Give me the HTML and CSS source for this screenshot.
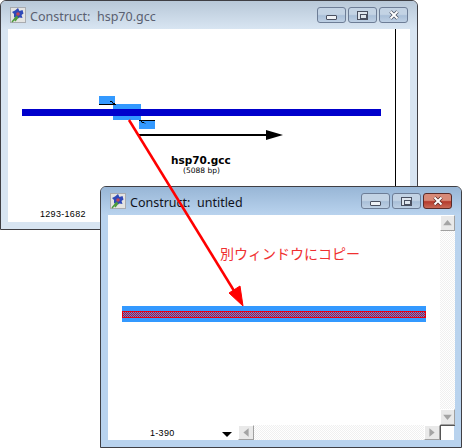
FILE: index.html
```html
<!DOCTYPE html>
<html lang="en">
<head>
    <meta charset="UTF-8">
    <title>Construct</title>
    <link rel="stylesheet" href="styles.css">
</head>
<body>
    <div class="window window-back">
        <div class="titlebar">
            <svg class="app-icon" viewBox="0 0 16 16"><rect x="0.5" y="0.5" width="15" height="15" fill="#e4e4e2" stroke="#a8abb0"/><path d="M8 1l1.500 3 3-1 1 3.500-2 1.500 1 3-3-.5-1.500 1-2-1.500-2 .5 0-3.500-2-2 3-1.500z" fill="#2f49b8"/><circle cx="8" cy="7" r="1.800" fill="#c04858"/><path d="M2 15l5-6M5 14l3-4" stroke="#4c9a3c" stroke-width="1.500"/></svg>
            <span class="title">Construct:  hsp70.gcc</span>
            <div class="controls">
                <div class="ctl"><span class="glyph-min"></span></div>
                <div class="ctl"><span class="glyph-max"></span></div>
                <div class="ctl"><svg class="glyph-x" viewBox="0 0 12 10"><path d="M2.500 1.500l7 7M9.500 1.500l-7 7" fill="none" stroke="#4a5060" stroke-width="3.400"/><path d="M2.500 1.500l7 7M9.500 1.500l-7 7" fill="none" stroke="#fff" stroke-width="2"/></svg></div>
            </div>
        </div>
        <div class="canvas">
            <svg class="drawing" viewBox="8 29 402 193">
                <rect x="99" y="96" width="16" height="8" fill="#3399ff"/>
                <rect x="113" y="104" width="28" height="16" fill="#3399ff"/>
                <rect x="139" y="121" width="16" height="8" fill="#3399ff"/>
                <rect x="22" y="109" width="359" height="7" fill="#0000cc"/>
                <path d="M99 104.500h17M110 101.500h2l1 2h2" fill="none" stroke="#000"/>
                <path d="M139 120.500h16M139 120.500h2l1 2h2l1 1" fill="none" stroke="#000"/>
                <rect x="139" y="134" width="130" height="2" fill="#000"/>
                <path d="M283 135l-17-5v10z" fill="#000"/>
                <rect x="395" y="29" width="1" height="193" fill="#000"/>
            </svg>
            <div class="name">hsp70.gcc</div>
            <div class="size">(5088 bp)</div>
            <div class="range range-back">1293-1682</div>
        </div>
    </div>

    <div class="window window-front">
        <div class="titlebar">
            <svg class="app-icon" viewBox="0 0 16 16"><rect x="0.5" y="0.5" width="15" height="15" fill="#e4e4e2" stroke="#a8abb0"/><path d="M8 1l1.500 3 3-1 1 3.500-2 1.500 1 3-3-.5-1.500 1-2-1.500-2 .5 0-3.500-2-2 3-1.500z" fill="#2f49b8"/><circle cx="8" cy="7" r="1.800" fill="#c04858"/><path d="M2 15l5-6M5 14l3-4" stroke="#4c9a3c" stroke-width="1.500"/></svg>
            <span class="title">Construct:  untitled</span>
            <div class="controls">
                <div class="ctl"><span class="glyph-min"></span></div>
                <div class="ctl"><span class="glyph-max"></span></div>
                <div class="ctl ctl-close"><svg class="glyph-x" viewBox="0 0 12 10"><path d="M2.500 1.500l7 7M9.500 1.500l-7 7" fill="none" stroke="#5a2a28" stroke-width="3.400"/><path d="M2.500 1.500l7 7M9.500 1.500l-7 7" fill="none" stroke="#fff" stroke-width="2"/></svg></div>
            </div>
        </div>
        <div class="canvas canvas-grid">
            <div class="plot">
                <div class="seq"><div class="seq-core"></div></div>
                <div class="note">別ウィンドウにコピー</div>
            </div>
            <div class="vbar">
                <div class="sbtn"><svg viewBox="0 0 15 15"><path d="M7.500 4l5 6h-10z" fill="#a4a4a4"/></svg></div>
                <div class="track"></div>
                <div class="sbtn"><svg viewBox="0 0 15 15"><path d="M7.500 11l5-6h-10z" fill="#a4a4a4"/></svg></div>
            </div>
            <div class="status">
                <div class="range">1-390</div>
                <div class="marker"></div>
                <div class="hbar">
                    <div class="sbtn sbtn-h"><svg viewBox="0 0 16 15"><path d="M5 7.500l6-5v10z" fill="#a4a4a4"/></svg></div>
                    <div class="track"></div>
                    <div class="sbtn sbtn-h"><svg viewBox="0 0 16 15"><path d="M11 7.500l-6-5v10z" fill="#a4a4a4"/></svg></div>
                </div>
            </div>
            <div class="corner"></div>
        </div>
    </div>

    <svg class="copy-arrow" viewBox="0 0 463 448">
        <path d="M129 120L236 294" stroke="#f00" stroke-width="2.500" fill="none"/>
        <path d="M243 306L229 293 240 286z" fill="#f00" stroke="#f00"/>
    </svg>
</body>
</html>
```

FILE: styles.css
```css
* {
    box-sizing: border-box;
}

body {
    margin: 0;
    width: 463px;
    height: 448px;
    overflow: hidden;
    background: #fff;
    font-family: "Liberation Sans", sans-serif;
}

.window {
    position: absolute;
    display: flex;
    flex-direction: column;
    border: 1px solid #3f3f44;
    border-radius: 6px 6px 0 0;
}

.window-back {
    left: 0;
    top: 0;
    width: 418px;
    height: 230px;
    padding: 0 7px 7px;
    background: #d8e5f2;
    color: #5a5f70;
    --title-top: #b8c8d8;
    --title-bottom: #d8e5f2;
}

.window-front {
    left: 100px;
    top: 186px;
    width: 362px;
    height: 262px;
    padding: 0 7px 7px;
    background: #b9d3ee;
    color: #10131c;
    --title-top: #98b6d6;
    --title-bottom: #b9d3ee;
}

.titlebar {
    display: flex;
    align-items: center;
    flex: none;
    height: 28px;
    margin: 0 -7px;
    padding: 0 9px 0 9px;
    border-radius: 5px 5px 0 0;
    background: linear-gradient(var(--title-top), var(--title-bottom));
}

.app-icon {
    width: 16px;
    height: 16px;
    margin-right: 4px;
}

.title {
    margin-top: 2px;
    font-family: "Noto Sans", sans-serif;
    font-size: 12.5px;
    white-space: pre;
}

.controls {
    display: flex;
    gap: 2px;
    margin-left: auto;
}

.ctl {
    display: flex;
    justify-content: center;
    align-items: center;
    width: 29px;
    height: 16px;
    border: 1px solid #6d7d96;
    border-radius: 3px;
    background: linear-gradient(#c3d3e4 45%, #a9bfd8 55%, #bed0e4);
}

.ctl-close {
    border-color: #5a2a28;
    background: linear-gradient(#d88a78 45%, #b53a2c 55%, #c86a58);
}

.glyph-min {
    width: 11px;
    height: 5px;
    margin-top: 4px;
    border: 1px solid #4a5060;
    border-radius: 1px;
    background: #eef1f5;
}

.glyph-max {
    position: relative;
    width: 11px;
    height: 9px;
    border: 1px solid #4a5060;
    background: #dfe6ee;
}

.glyph-max::after {
    content: "";
    position: absolute;
    left: 2px;
    top: 2px;
    width: 5px;
    height: 3px;
    border: 1px solid #4a5060;
}

.glyph-x {
    width: 12px;
    height: 10px;
}

.canvas {
    position: relative;
    flex: 1;
    background: #fff;
    color: #000;
}

.drawing {
    display: block;
    width: 100%;
    height: 100%;
}

.name,
.size,
.range-back {
    position: absolute;
    white-space: nowrap;
}

.name {
    left: 163px;
    top: 125px;
    font-family: "DejaVu Sans", sans-serif;
    font-size: 10.500px;
    font-weight: 700;
}

.size {
    left: 175px;
    top: 137px;
    font-family: "DejaVu Sans", sans-serif;
    font-size: 7.500px;
}

.range {
    font-size: 9px;
    letter-spacing: 0.3px;
}

.range-back {
    left: 32px;
    top: 180px;
}

.canvas-grid {
    display: grid;
    grid-template-columns: 332px 15px;
    grid-template-rows: 210px 15px;
}

.plot {
    position: relative;
}

.seq {
    position: absolute;
    left: 14px;
    right: 14px;
    top: 91px;
    height: 16px;
    padding: 5px 0 4px;
    background: #3399ff;
}

.seq-core {
    height: 7px;
    border: 1px solid #e60012;
    background: repeating-conic-gradient(#e60012 0 25%, #3399ff 0 50%) 0 0 / 2px 2px;
}

.note {
    position: absolute;
    left: 112px;
    top: 28px;
    color: #f03030;
    font-family: "Noto Sans CJK JP", sans-serif;
    font-size: 14px;
    white-space: nowrap;
}

.vbar {
    display: flex;
    flex-direction: column;
}

.sbtn {
    flex: none;
    width: 15px;
    height: 16px;
    border: 1px solid #fff;
    border-right-color: #a0a0a0;
    border-bottom-color: #a0a0a0;
    background: #e9e9e9;
}

.sbtn svg {
    display: block;
    width: 100%;
    height: 100%;
}

.sbtn-h {
    width: 16px;
    height: 15px;
}

.track {
    flex: 1;
    background: repeating-conic-gradient(#f0f0f0 0 25%, #fff 0 50%) 0 0 / 2px 2px;
}

.status {
    display: flex;
    align-items: center;
}

.status .range {
    margin-left: 42px;
}

.marker {
    width: 0;
    height: 0;
    margin: 4px 0 0 47px;
    border-top: 5px solid #000;
    border-left: 5px solid transparent;
    border-right: 5px solid transparent;
}

.hbar {
    display: flex;
    flex: 1;
    height: 15px;
    margin-left: 6px;
}

.corner {
    border-left: 1px solid #555;
    border-top: 1px solid #555;
}

.copy-arrow {
    position: absolute;
    left: 0;
    top: 0;
    width: 463px;
    height: 448px;
    pointer-events: none;
}
```
